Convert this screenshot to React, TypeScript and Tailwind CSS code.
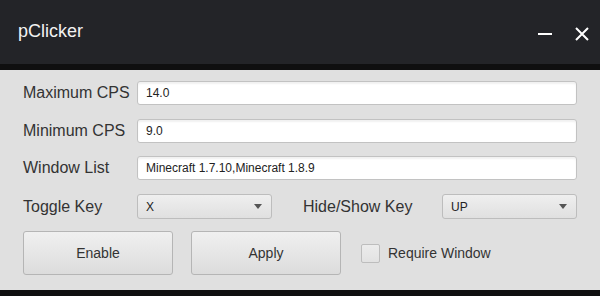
import { useState } from 'react';

const font = { fontFamily: '"Liberation Sans", Arial, sans-serif' };

function Field({ value }: { value: string }) {
    return (
        <div className="flex-1 h-6 flex items-center px-2 bg-white border border-[#c2c2c2] rounded-[3px] shadow-[inset_0_2px_2px_rgba(0,0,0,0.06)] text-[12px] text-[#222]">
            {value}
        </div>
    );
}

function Dropdown({ value }: { value: string }) {
    return (
        <div className="w-[135px] h-[25px] flex items-center justify-between pl-2 pr-[9px] border border-[#bdbdbd] rounded-[3px] bg-gradient-to-b from-[#efefef] to-[#e0e0e0] text-[12px] text-[#222]">
            <span>{value}</span>
            <svg width="8" height="5" viewBox="0 0 8 5">
                <path d="M0 0 H8 L4 5 Z" fill="#555" />
            </svg>
        </div>
    );
}

function Button({ label }: { label: string }) {
    return (
        <button className="w-[150px] h-11 border border-[#b5b5b5] rounded-[3px] bg-gradient-to-b from-[#f0f0f0] to-[#dcdcdc] text-[14px] text-[#333]">
            {label}
        </button>
    );
}

export default function App() {
    const [requireWindow, setRequireWindow] = useState(false);

    return (
        <div className="w-[600px] h-[296px] flex flex-col bg-[#0f0f10] overflow-hidden" style={font}>
            {/* title bar */}
            <div className="h-16 flex items-center bg-[#232428] pl-[18px] pr-[11px]">
                <span className="text-[18px] text-[#f2f2f2] flex-1 -mt-[2px]">pClicker</span>
                <div className="flex items-center gap-[23px] mt-[4px]">
                    <div className="w-[14px] h-[2px] bg-white" />
                    <svg width="14" height="14" viewBox="0 0 14 14">
                        <path d="M1 1 L13 13 M13 1 L1 13" stroke="white" strokeWidth="2" />
                    </svg>
                </div>
            </div>

            {/* body */}
            <div className="mt-[6px] h-[220px] bg-[#e0e0e0] px-[23px] pt-[11px] flex flex-col text-[16px] text-[#333]">
                <div className="flex items-center">
                    <span className="w-[114px]">Maximum CPS</span>
                    <Field value="14.0" />
                </div>
                <div className="flex items-center mt-[14px]">
                    <span className="w-[114px]">Minimum CPS</span>
                    <Field value="9.0" />
                </div>
                <div className="flex items-center mt-[13px]">
                    <span className="w-[114px]">Window List</span>
                    <Field value="Minecraft 1.7.10,Minecraft 1.8.9" />
                </div>
                <div className="flex items-center mt-[14px]">
                    <span className="w-[114px]">Toggle Key</span>
                    <Dropdown value="X" />
                    <span className="ml-[31px] w-[139px]">Hide/Show Key</span>
                    <Dropdown value="UP" />
                </div>
                <div className="flex items-center mt-3">
                    <Button label="Enable" />
                    <div className="w-[18px]" />
                    <Button label="Apply" />
                    <label className="flex items-center ml-5 text-[14px] cursor-pointer">
                        <input
                            type="checkbox"
                            checked={requireWindow}
                            onChange={(e) => setRequireWindow(e.target.checked)}
                            className="appearance-none w-[19px] h-[19px] border border-[#bdbdbd] rounded-[2px] bg-gradient-to-b from-[#ececec] to-[#e2e2e2] checked:bg-[#cfcfcf]"
                        />
                        <span className="ml-2">Require Window</span>
                    </label>
                </div>
            </div>
        </div>
    );
}
